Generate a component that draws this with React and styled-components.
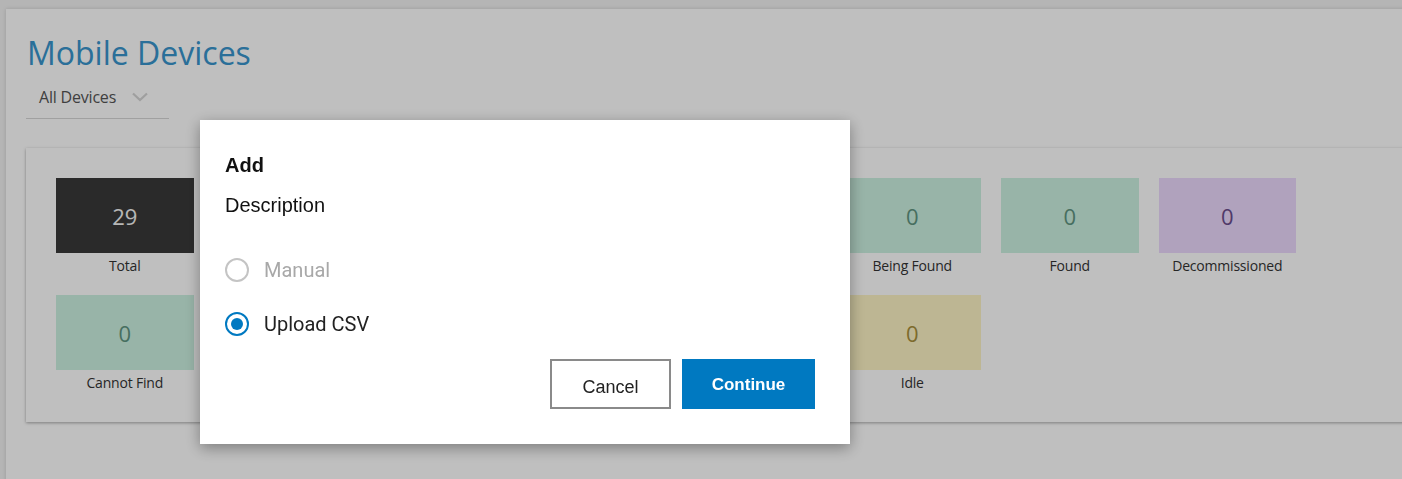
import React, { useState } from 'react';
import styled, { createGlobalStyle } from 'styled-components';

const GlobalStyle = createGlobalStyle`
  html, body {
    margin: 0;
    padding: 0;
    background: #f2f2f2;
    overflow: hidden;
  }
  * { box-sizing: border-box; }
`;

const tiles = [
  [
    { label: 'Total', value: 29, kind: 'dark' },
    { label: 'Active', value: 12, kind: 'blue' },
    { label: 'Inactive', value: 8, kind: 'grey' },
    { label: 'Lost', value: 4, kind: 'red' },
    { label: 'Stolen', value: 5, kind: 'red' },
    { label: 'Being Found', value: 0, kind: 'green' },
    { label: 'Found', value: 0, kind: 'green' },
    { label: 'Decommissioned', value: 0, kind: 'purple' },
  ],
  [
    { label: 'Cannot Find', value: 0, kind: 'green' },
    { label: 'Unassigned', value: 0, kind: 'grey' },
    { label: 'Charging', value: 0, kind: 'blue' },
    { label: 'Offline', value: 0, kind: 'grey' },
    { label: 'Online', value: 0, kind: 'blue' },
    { label: 'Idle', value: 0, kind: 'yellow' },
  ],
];

const palette = {
  dark: { bg: '#393939', fg: '#f4f4f4' },
  green: { bg: '#cbf0e0', fg: '#5f9480' },
  purple: { bg: '#ebd8fc', fg: '#6a4d8c' },
  yellow: { bg: '#fcf3c4', fg: '#a78f3c' },
  blue: { bg: '#cfe6f7', fg: '#3a7bb0' },
  grey: { bg: '#e6e6e6', fg: '#666' },
  red: { bg: '#f9d4d4', fg: '#b04a4a' },
};

function App() {
  const [mode, setMode] = useState('csv');
  return (
    <>
      <GlobalStyle />
      <Page>
        <Panel>
          <Title>Mobile Devices</Title>
          <Dropdown>
            <span>All Devices</span>
            <Chevron viewBox="0 0 16 10">
              <path d="M1 1.5 L8 8 L15 1.5" />
            </Chevron>
          </Dropdown>
          <Card>
            {tiles.map((row, i) => (
              <TileGrid key={i}>
                {row.map(t => (
                  <Tile key={t.label}>
                    <TileBox kind={t.kind}>{t.value}</TileBox>
                    <TileLabel>{t.label}</TileLabel>
                  </Tile>
                ))}
              </TileGrid>
            ))}
          </Card>
        </Panel>
      </Page>

      <Overlay>
        <Modal>
          <ModalTitle>Add</ModalTitle>
          <ModalDesc>Description</ModalDesc>
          <Options>
            <Option disabled>
              <Radio checked={mode === 'manual'} disabled />
              Manual
            </Option>
            <Option onClick={() => setMode('csv')}>
              <Radio checked={mode === 'csv'} />
              Upload CSV
            </Option>
          </Options>
          <Actions>
            <SecondaryButton>Cancel</SecondaryButton>
            <PrimaryButton>Continue</PrimaryButton>
          </Actions>
        </Modal>
      </Overlay>
    </>
  );
}

export default App;

const Page = styled.div`
  padding: 9px 0 0 6px;
  height: 100vh;
`;

const Panel = styled.div`
  width: 1440px;
  height: 600px;
  background: #fff;
  box-shadow: 0 0 4px rgba(0, 0, 0, 0.15);
  padding: 22px 20px 0 20px;
`;

const Title = styled.h1`
  margin: 0 0 0 1px;
  font-family: "Open Sans", sans-serif;
  font-weight: 400;
  font-size: 32px;
  line-height: 44px;
  color: #3894cc;
  letter-spacing: 0;
`;

const Dropdown = styled.div`
  width: 143px;
  height: 40px;
  margin-top: 4px;
  display: flex;
  align-items: center;
  padding: 0 0 4px 13px;
  border-bottom: 1px solid #d6d6d6;
  font-family: "Open Sans", sans-serif;
  font-size: 16px;
  color: #555;
  letter-spacing: -0.2px;

  span { margin-right: 16px; }
`;

const Chevron = styled.svg`
  width: 16px;
  height: 10px;
  fill: none;
  stroke: #d4d4d4;
  stroke-width: 2.2;
`;

const Card = styled.div`
  margin-top: 29px;
  background: #fff;
  box-shadow: 0 1px 3px rgba(0, 0, 0, 0.35);
  padding: 30px 30px 29px 30px;
  display: flex;
  flex-direction: column;
  gap: 19px;
`;

const TileGrid = styled.div`
  display: grid;
  grid-template-columns: repeat(8, 137.5px);
  column-gap: 20px;
`;

const Tile = styled.div`
  display: flex;
  flex-direction: column;
  align-items: center;
`;

const TileBox = styled.div`
  width: 100%;
  height: 75px;
  display: flex;
  align-items: center;
  justify-content: center;
  background: ${p => palette[p.kind].bg};
  color: ${p => palette[p.kind].fg};
  font-family: "Open Sans", sans-serif;
  font-size: 22px;
`;

const TileLabel = styled.div`
  margin-top: 3px;
  line-height: 20px;
  font-family: "Open Sans", sans-serif;
  font-size: 14px;
  color: #333;
  letter-spacing: -0.2px;
`;

const Overlay = styled.div`
  position: fixed;
  inset: 0;
  background: rgba(0, 0, 0, 0.25);
`;

const Modal = styled.div`
  position: absolute;
  left: 200px;
  top: 120px;
  width: 650px;
  height: 324px;
  background: #fff;
  box-shadow: 0 4px 14px rgba(0, 0, 0, 0.35);
  padding: 33px 35px 35px 25px;
  display: flex;
  flex-direction: column;
  font-family: "Liberation Sans", Arial, sans-serif;
  color: #111;
`;

const ModalTitle = styled.div`
  font-size: 20px;
  font-weight: 700;
  line-height: 24px;
`;

const ModalDesc = styled.div`
  margin-top: 16px;
  font-size: 20px;
  line-height: 24px;
`;

const Options = styled.div`
  margin-top: 41px;
  display: flex;
  flex-direction: column;
  gap: 30px;
`;

const Option = styled.label`
  display: flex;
  align-items: center;
  gap: 15px;
  height: 24px;
  font-family: Roboto, sans-serif;
  font-size: 20px;
  color: ${p => (p.disabled ? '#a8a8a8' : '#222')};
  cursor: ${p => (p.disabled ? 'default' : 'pointer')};
`;

const Radio = styled.span`
  width: 24px;
  height: 24px;
  border-radius: 50%;
  border: 2px solid ${p => (p.disabled ? '#c4c4c4' : '#0079c1')};
  display: flex;
  align-items: center;
  justify-content: center;

  &::after {
    content: '';
    width: 12px;
    height: 12px;
    border-radius: 50%;
    background: #0079c1;
    display: ${p => (p.checked ? 'block' : 'none')};
  }
`;

const Actions = styled.div`
  margin-top: auto;
  display: flex;
  justify-content: flex-end;
  gap: 11px;
`;

const SecondaryButton = styled.button`
  width: 121px;
  height: 50px;
  padding-top: 8px;
  background: #fff;
  border: 2px solid #8a8a8a;
  font-family: "Liberation Sans", Arial, sans-serif;
  font-size: 18px;
  color: #222;
`;

const PrimaryButton = styled.button`
  width: 133px;
  height: 50px;
  background: #0079c1;
  border: none;
  font-family: "Liberation Sans", Arial, sans-serif;
  font-size: 17px;
  font-weight: 600;
  color: #fff;
  padding-top: 2px;
`;
